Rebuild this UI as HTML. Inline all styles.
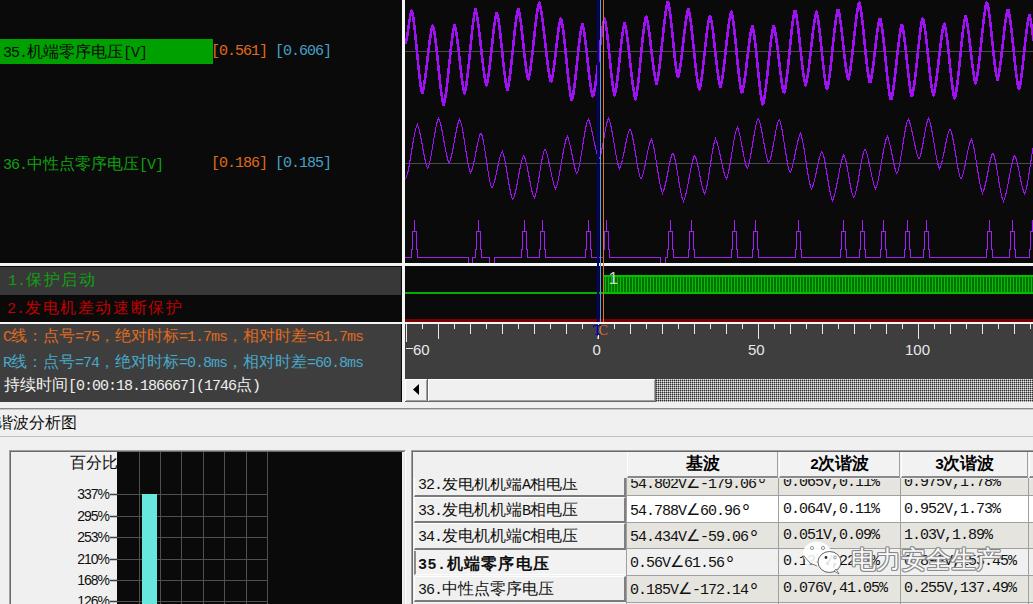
<!DOCTYPE html>
<html><head><meta charset="utf-8"><style>
*{margin:0;padding:0}
html,body{width:1033px;height:604px;overflow:hidden;background:#f0f0f0}
#root{position:relative;width:1033px;height:604px;overflow:hidden}
.r{position:absolute}
.t{position:absolute;white-space:nowrap;font-family:"Liberation Mono",monospace;font-size:13.333px;line-height:18px}
.t .c{font-family:"Liberation Sans",sans-serif;font-size:16px;font-weight:normal}
.t .a{text-decoration:none;font-size:15px;letter-spacing:-1px}
.ls .c{letter-spacing:1.6px}
.ls .a{letter-spacing:0}
svg{position:absolute;left:0;top:0}
.big .c{font-size:16px}
.yl{position:absolute;right:924px;font-family:"Liberation Sans",sans-serif;font-size:14px;letter-spacing:-1px;line-height:18px;color:#101010;text-align:right}
.hd{text-align:center;font-weight:bold}
.hd .c{font-weight:bold;font-size:17px}
.t .dg{font-size:20px;letter-spacing:-4px;text-decoration:none;vertical-align:-2.5px;line-height:10px}
.bold{font-weight:bold}
.bold .c{font-weight:bold;letter-spacing:1.3px}
.bold .a{letter-spacing:0.5px}
.wm{position:absolute;font-family:"Liberation Sans",sans-serif;font-size:24.5px;line-height:30px;color:#fafafa;text-shadow:1px 0 #888,-1px 0 #888,0 1px #888,0 -1px #888,1px 1px #999,-1px -1px #999,1px -1px #999,-1px 1px #999;white-space:nowrap}
</style></head><body><div id="root">
<div class=r style="left:0px;top:0px;width:1033px;height:402px;background:#0a0a0a;"></div>
<div class=r style="left:0px;top:39px;width:213px;height:25px;background:#00a000;"></div>
<div class="t" style="left:3px;top:43px;color:#0a0a0a;"><s class=a>35.</s><b class=c>机端零序电压</b><s class=a>[V]</s></div>
<div class="t" style="left:211px;top:43px;color:#e06a1e;"><s class=a>[0.561]</s></div>
<div class="t" style="left:275px;top:43px;color:#48a0c8;"><s class=a>[0.606]</s></div>
<div class="t" style="left:3px;top:155px;color:#10a010;"><s class=a>36.</s><b class=c>中性点零序电压</b><s class=a>[V]</s></div>
<div class="t" style="left:211px;top:155px;color:#e06a1e;"><s class=a>[0.186]</s></div>
<div class="t" style="left:275px;top:155px;color:#48a0c8;"><s class=a>[0.185]</s></div>
<div class=r style="left:0px;top:263px;width:1033px;height:3px;background:#f4f4f4;"></div>
<div class=r style="left:402px;top:0px;width:3px;height:402px;background:#f4f4f4;"></div>
<div class=r style="left:0px;top:267px;width:401px;height:28px;background:#383838;"></div>
<div class="t ls" style="left:8px;top:271px;color:#10a010;"><s class=a>1.</s><b class=c>保护启动</b></div>
<div class="t ls" style="left:7px;top:299px;color:#c00000;"><s class=a>2.</s><b class=c>发电机差动速断保护</b></div>
<div class=r style="left:0px;top:322px;width:1033px;height:2px;background:#f4f4f4;"></div>
<div class=r style="left:0px;top:324px;width:401px;height:78px;background:#3e3e3e;"></div>
<div class="t" style="left:3px;top:327px;color:#e06a1e;"><s class=a>C</s><b class=c>线：点号</b><s class=a>=75</s><b class=c>，绝对时标</b><s class=a>=1.7ms</s><b class=c>，相对时差</b><s class=a>=61.7ms</s></div>
<div class="t" style="left:3px;top:353px;color:#48a8c8;"><s class=a>R</s><b class=c>线：点号</b><s class=a>=74</s><b class=c>，绝对时标</b><s class=a>=0.8ms</s><b class=c>，相对时差</b><s class=a>=60.8ms</s></div>
<div class="t" style="left:4px;top:376px;color:#f0f0f0;"><b class=c>持续时间</b><s class=a>[0:00:18.186667](1746</s><b class=c>点</b><s class=a>)</s></div>
<div class=r style="left:405px;top:324px;width:628px;height:55px;background:#3e3e3e;"></div>
<div class=r style="left:405px;top:379px;width:628px;height:23px;background:#f0f0f0;"></div>
<div class=r style="left:0px;top:402px;width:1033px;height:202px;background:#f0f0f0;"></div>
<div class=r style="left:0px;top:408px;width:1033px;height:1px;background:#8a8a8a;"></div>
<div class=r style="left:0px;top:409px;width:1033px;height:1px;background:#c8c8c8;"></div>
<div class=r style="left:0px;top:436px;width:1033px;height:1px;background:#c0c0c0;"></div>
<svg width="1033" height="604" viewBox="0 0 1033 604" style="left:0;top:0">
<defs><clipPath id="wc"><rect x="405" y="0" width="628" height="263"/></clipPath></defs>
<g clip-path="url(#wc)">
<line x1="405" y1="51.5" x2="1033" y2="51.5" stroke="#4a4a4a" stroke-width="1"/>
<line x1="405" y1="163.5" x2="1033" y2="163.5" stroke="#4a4a4a" stroke-width="1"/>
<path d="M405.5 44.1 L406.5 39.7 L407.5 33.8 L408.5 27.1 L409.5 20.4 L410.5 14.8 L411.5 10.8 L412.5 13.1 L413.5 19.1 L414.5 27.0 L415.5 36.4 L416.5 46.6 L417.5 57.2 L418.5 67.4 L419.5 76.8 L420.5 84.7 L421.5 90.7 L422.5 92.8 L423.5 88.6 L424.5 82.8 L425.5 75.7 L426.5 67.7 L427.5 59.2 L428.5 50.7 L429.5 42.7 L430.5 35.6 L431.5 29.8 L432.5 25.6 L433.5 27.4 L434.5 32.9 L435.5 40.0 L436.5 48.5 L437.5 57.8 L438.5 67.5 L439.5 77.1 L440.5 86.1 L441.5 93.9 L442.5 100.3 L443.5 104.9 L444.5 102.3 L445.5 96.6 L446.5 89.4 L447.5 80.8 L448.5 71.4 L449.5 61.7 L450.5 52.1 L451.5 43.3 L452.5 35.6 L453.5 29.4 L454.5 24.9 L455.5 28.2 L456.5 33.8 L457.5 41.0 L458.5 49.3 L459.5 58.3 L460.5 67.3 L461.5 75.8 L462.5 83.3 L463.5 89.2 L464.5 93.5 L465.5 89.9 L466.5 83.7 L467.5 76.0 L468.5 66.9 L469.5 57.1 L470.5 46.9 L471.5 36.9 L472.5 27.8 L473.5 19.9 L474.5 13.6 L475.5 9.1 L476.5 13.1 L477.5 18.7 L478.5 25.7 L479.5 33.9 L480.5 42.8 L481.5 51.9 L482.5 60.8 L483.5 69.0 L484.5 76.0 L485.5 81.6 L486.5 85.6 L487.5 81.4 L488.5 75.5 L489.5 68.0 L490.5 59.4 L491.5 50.1 L492.5 40.8 L493.5 31.9 L494.5 24.0 L495.5 17.6 L496.5 12.9 L497.5 14.6 L498.5 20.1 L499.5 27.3 L500.5 35.8 L501.5 45.2 L502.5 54.9 L503.5 64.4 L504.5 73.1 L505.5 80.5 L506.5 86.4 L507.5 89.9 L508.5 85.4 L509.5 79.1 L510.5 71.3 L511.5 62.3 L512.5 52.7 L513.5 42.8 L514.5 33.3 L515.5 24.6 L516.5 17.3 L517.5 11.5 L518.5 8.9 L519.5 13.5 L520.5 19.9 L521.5 27.7 L522.5 36.6 L523.5 46.0 L524.5 55.3 L525.5 63.9 L526.5 71.2 L527.5 76.9 L528.5 79.4 L529.5 74.9 L530.5 68.8 L531.5 61.2 L532.5 52.6 L533.5 43.3 L534.5 33.9 L535.5 24.9 L536.5 16.7 L537.5 9.8 L538.5 4.5 L539.5 2.8 L540.5 7.1 L541.5 12.8 L542.5 19.9 L543.5 27.9 L544.5 36.5 L545.5 45.5 L546.5 54.3 L547.5 62.5 L548.5 69.9 L549.5 76.0 L550.5 80.8 L551.5 81.5 L552.5 76.9 L553.5 70.6 L554.5 63.0 L555.5 54.5 L556.5 45.7 L557.5 37.2 L558.5 29.6 L559.5 23.3 L560.5 18.7 L561.5 19.7 L562.5 25.2 L563.5 32.5 L564.5 41.1 L565.5 50.7 L566.5 60.7 L567.5 70.7 L568.5 80.0 L569.5 88.3 L570.5 95.0 L571.5 100.0 L572.5 98.3 L573.5 92.9 L574.5 85.8 L575.5 77.4 L576.5 68.1 L577.5 58.6 L578.5 49.2 L579.5 40.6 L580.5 33.2 L581.5 27.4 L582.5 24.0 L583.5 28.3 L584.5 34.3 L585.5 41.8 L586.5 50.4 L587.5 59.6 L588.5 68.9 L589.5 77.6 L590.5 85.4 L591.5 91.7 L592.5 96.4 L593.5 94.9 L594.5 90.1 L595.5 83.9 L596.5 76.5 L597.5 68.3 L598.5 59.6 L599.5 50.8 L600.5 42.3 L601.5 34.6 L602.5 27.9 L603.5 22.4 L604.5 18.5 L605.5 22.2 L606.5 28.5 L607.5 36.5 L608.5 45.9 L609.5 55.9 L610.5 66.0 L611.5 75.5 L612.5 83.8 L613.5 90.5 L614.5 95.2 L615.5 91.9 L616.5 85.9 L617.5 78.3 L618.5 69.6 L619.5 60.2 L620.5 50.7 L621.5 41.7 L622.5 33.9 L623.5 27.6 L624.5 23.1 L625.5 26.3 L626.5 31.9 L627.5 38.9 L628.5 47.1 L629.5 56.0 L630.5 65.2 L631.5 74.2 L632.5 82.4 L633.5 89.6 L634.5 95.3 L635.5 99.3 L636.5 94.7 L637.5 88.3 L638.5 80.1 L639.5 70.7 L640.5 60.5 L641.5 50.2 L642.5 40.2 L643.5 31.3 L644.5 23.7 L645.5 18.0 L646.5 16.8 L647.5 21.3 L648.5 27.3 L649.5 34.6 L650.5 42.8 L651.5 51.4 L652.5 59.9 L653.5 67.7 L654.5 74.6 L655.5 80.0 L656.5 83.8 L657.5 79.7 L658.5 73.9 L659.5 66.6 L660.5 58.2 L661.5 49.0 L662.5 39.5 L663.5 30.1 L664.5 21.3 L665.5 13.6 L666.5 7.2 L667.5 2.3 L668.5 3.3 L669.5 9.0 L670.5 16.5 L671.5 25.3 L672.5 35.1 L673.5 45.1 L674.5 54.8 L675.5 63.6 L676.5 70.9 L677.5 76.3 L678.5 76.5 L679.5 71.7 L680.5 65.3 L681.5 57.6 L682.5 49.0 L683.5 40.1 L684.5 31.4 L685.5 23.4 L686.5 16.5 L687.5 11.2 L688.5 8.9 L689.5 13.5 L690.5 19.9 L691.5 27.7 L692.5 36.7 L693.5 46.3 L694.5 56.0 L695.5 65.4 L696.5 74.0 L697.5 81.2 L698.5 86.9 L699.5 89.5 L700.5 85.1 L701.5 79.0 L702.5 71.5 L703.5 62.9 L704.5 53.8 L705.5 44.6 L706.5 35.8 L707.5 27.9 L708.5 21.4 L709.5 16.4 L710.5 16.4 L711.5 21.3 L712.5 27.9 L713.5 35.8 L714.5 44.6 L715.5 53.8 L716.5 62.8 L717.5 71.1 L718.5 78.2 L719.5 83.8 L720.5 87.1 L721.5 82.9 L722.5 77.0 L723.5 69.8 L724.5 61.4 L725.5 52.4 L726.5 43.2 L727.5 34.3 L728.5 26.2 L729.5 19.4 L730.5 14.0 L731.5 11.6 L732.5 16.5 L733.5 23.3 L734.5 31.7 L735.5 41.2 L736.5 51.3 L737.5 61.5 L738.5 71.2 L739.5 79.8 L740.5 86.9 L741.5 92.2 L742.5 91.7 L743.5 87.0 L744.5 80.8 L745.5 73.4 L746.5 65.2 L747.5 56.7 L748.5 48.3 L749.5 40.6 L750.5 34.0 L751.5 28.8 L752.5 25.9 L753.5 30.5 L754.5 37.1 L755.5 45.2 L756.5 54.6 L757.5 64.5 L758.5 74.6 L759.5 84.1 L760.5 92.5 L761.5 99.4 L762.5 104.5 L763.5 102.8 L764.5 97.4 L765.5 90.3 L766.5 82.0 L767.5 72.8 L768.5 63.1 L769.5 53.7 L770.5 44.8 L771.5 37.1 L772.5 30.8 L773.5 26.2 L774.5 28.4 L775.5 33.5 L776.5 40.1 L777.5 47.8 L778.5 56.2 L779.5 64.8 L780.5 73.1 L781.5 80.6 L782.5 86.9 L783.5 91.7 L784.5 92.2 L785.5 87.0 L786.5 80.1 L787.5 71.6 L788.5 62.1 L789.5 52.0 L790.5 41.8 L791.5 32.2 L792.5 23.6 L793.5 16.5 L794.5 11.1 L795.5 11.0 L796.5 16.0 L797.5 22.7 L798.5 30.8 L799.5 39.8 L800.5 49.2 L801.5 58.6 L802.5 67.3 L803.5 74.8 L804.5 80.9 L805.5 85.3 L806.5 82.2 L807.5 76.8 L808.5 70.1 L809.5 62.2 L810.5 53.6 L811.5 44.7 L812.5 36.0 L813.5 28.1 L814.5 21.2 L815.5 15.7 L816.5 11.8 L817.5 16.1 L818.5 22.3 L819.5 30.0 L820.5 38.9 L821.5 48.5 L822.5 58.3 L823.5 67.7 L824.5 76.0 L825.5 83.0 L826.5 88.3 L827.5 88.3 L828.5 83.1 L829.5 76.3 L830.5 68.1 L831.5 58.9 L832.5 49.2 L833.5 39.5 L834.5 30.3 L835.5 22.1 L836.5 15.3 L837.5 10.1 L838.5 10.0 L839.5 14.9 L840.5 21.5 L841.5 29.4 L842.5 38.2 L843.5 47.4 L844.5 56.3 L845.5 64.5 L846.5 71.5 L847.5 77.0 L848.5 79.4 L849.5 74.9 L850.5 68.7 L851.5 61.1 L852.5 52.4 L853.5 43.1 L854.5 33.7 L855.5 24.6 L856.5 16.4 L857.5 9.5 L858.5 4.1 L859.5 2.5 L860.5 7.5 L861.5 14.2 L862.5 22.4 L863.5 31.7 L864.5 41.6 L865.5 51.6 L866.5 61.0 L867.5 69.5 L868.5 76.5 L869.5 81.8 L870.5 82.1 L871.5 77.3 L872.5 71.0 L873.5 63.3 L874.5 54.9 L875.5 46.2 L876.5 37.8 L877.5 30.1 L878.5 23.8 L879.5 19.0 L880.5 19.2 L881.5 24.5 L882.5 31.5 L883.5 39.9 L884.5 49.2 L885.5 59.2 L886.5 69.1 L887.5 78.4 L888.5 86.8 L889.5 93.8 L890.5 99.1 L891.5 99.2 L892.5 94.3 L893.5 87.7 L894.5 79.9 L895.5 71.1 L896.5 61.9 L897.5 52.7 L898.5 44.0 L899.5 36.2 L900.5 29.9 L901.5 25.1 L902.5 26.0 L903.5 31.5 L904.5 38.7 L905.5 47.3 L906.5 56.7 L907.5 66.3 L908.5 75.6 L909.5 83.9 L910.5 90.8 L911.5 95.9 L912.5 95.1 L913.5 89.8 L914.5 82.9 L915.5 74.7 L916.5 65.5 L917.5 55.9 L918.5 46.4 L919.5 37.4 L920.5 29.6 L921.5 23.1 L922.5 18.4 L923.5 20.1 L924.5 25.6 L925.5 32.8 L926.5 41.3 L927.5 50.6 L928.5 60.3 L929.5 69.8 L930.5 78.5 L931.5 86.0 L932.5 91.8 L933.5 95.3 L934.5 91.3 L935.5 85.7 L936.5 78.8 L937.5 70.9 L938.5 62.3 L939.5 53.5 L940.5 45.1 L941.5 37.4 L942.5 30.8 L943.5 25.7 L944.5 23.5 L945.5 28.1 L946.5 34.5 L947.5 42.5 L948.5 51.4 L949.5 61.0 L950.5 70.6 L951.5 79.5 L952.5 87.5 L953.5 93.9 L954.5 98.5 L955.5 95.8 L956.5 90.0 L957.5 82.4 L958.5 73.6 L959.5 63.9 L960.5 53.8 L961.5 44.0 L962.5 34.8 L963.5 26.8 L964.5 20.4 L965.5 15.9 L966.5 19.0 L967.5 24.6 L968.5 31.7 L969.5 39.9 L970.5 48.8 L971.5 57.7 L972.5 66.0 L973.5 73.4 L974.5 79.3 L975.5 83.5 L976.5 80.1 L977.5 74.4 L978.5 67.2 L979.5 58.8 L980.5 49.5 L981.5 39.9 L982.5 30.5 L983.5 21.6 L984.5 13.7 L985.5 7.2 L986.5 2.4 L987.5 3.3 L988.5 8.7 L989.5 15.8 L990.5 24.3 L991.5 33.7 L992.5 43.4 L993.5 53.1 L994.5 62.0 L995.5 69.7 L996.5 75.8 L997.5 80.1 L998.5 76.1 L999.5 70.5 L1000.5 63.4 L1001.5 55.2 L1002.5 46.4 L1003.5 37.4 L1004.5 28.9 L1005.5 21.2 L1006.5 14.8 L1007.5 10.0 L1008.5 10.1 L1009.5 15.3 L1010.5 22.1 L1011.5 30.3 L1012.5 39.5 L1013.5 49.1 L1014.5 58.8 L1015.5 68.0 L1016.5 76.2 L1017.5 83.0 L1018.5 88.2 L1019.5 88.2 L1020.5 83.0 L1021.5 76.1 L1022.5 67.8 L1023.5 58.6 L1024.5 49.0 L1025.5 39.6 L1026.5 31.0 L1027.5 23.6 L1028.5 17.9 L1029.5 15.2 L1030.5 19.5 L1031.5 25.3 L1032.5 32.5 L1033.5 40.7" fill="none" stroke="#a010f4" stroke-width="2.6" stroke-linejoin="round" shape-rendering="crispEdges"/>
<path d="M405.5 178.8 L406.5 177.0 L407.5 173.6 L408.5 169.1 L409.5 163.8 L410.5 158.0 L411.5 151.8 L412.5 145.6 L413.5 139.6 L414.5 134.3 L415.5 129.7 L416.5 126.2 L417.5 124.5 L418.5 127.2 L419.5 131.0 L420.5 135.6 L421.5 140.9 L422.5 146.4 L423.5 152.0 L424.5 157.3 L425.5 161.9 L426.5 165.7 L427.5 168.4 L428.5 166.7 L429.5 163.2 L430.5 158.6 L431.5 153.2 L432.5 147.3 L433.5 141.2 L434.5 135.1 L435.5 129.6 L436.5 124.7 L437.5 120.8 L438.5 118.0 L439.5 120.0 L440.5 123.5 L441.5 127.9 L442.5 133.0 L443.5 138.6 L444.5 144.2 L445.5 149.7 L446.5 154.6 L447.5 158.8 L448.5 161.9 L449.5 162.5 L450.5 159.6 L451.5 155.8 L452.5 151.1 L453.5 145.9 L454.5 140.4 L455.5 135.0 L456.5 129.9 L457.5 125.4 L458.5 121.7 L459.5 119.1 L460.5 120.9 L461.5 124.7 L462.5 129.6 L463.5 135.4 L464.5 141.7 L465.5 148.3 L466.5 154.7 L467.5 160.7 L468.5 165.9 L469.5 170.1 L470.5 173.1 L471.5 171.3 L472.5 168.1 L473.5 164.1 L474.5 159.4 L475.5 154.4 L476.5 149.2 L477.5 144.2 L478.5 139.8 L479.5 136.1 L480.5 133.3 L481.5 133.6 L482.5 137.2 L483.5 142.0 L484.5 147.7 L485.5 154.1 L486.5 160.9 L487.5 167.6 L488.5 174.0 L489.5 179.6 L490.5 184.3 L491.5 187.8 L492.5 187.6 L493.5 185.0 L494.5 181.5 L495.5 177.3 L496.5 172.7 L497.5 167.9 L498.5 163.3 L499.5 159.0 L500.5 155.4 L501.5 152.5 L502.5 151.3 L503.5 154.3 L504.5 158.4 L505.5 163.4 L506.5 169.1 L507.5 175.2 L508.5 181.3 L509.5 187.1 L510.5 192.2 L511.5 196.3 L512.5 199.4 L513.5 198.6 L514.5 195.5 L515.5 191.6 L516.5 187.0 L517.5 181.9 L518.5 176.5 L519.5 171.2 L520.5 166.3 L521.5 161.9 L522.5 158.3 L523.5 155.7 L524.5 156.7 L525.5 159.8 L526.5 163.8 L527.5 168.5 L528.5 173.7 L529.5 179.1 L530.5 184.4 L531.5 189.2 L532.5 193.3 L533.5 196.5 L534.5 197.9 L535.5 194.9 L536.5 190.9 L537.5 186.0 L538.5 180.3 L539.5 174.3 L540.5 168.2 L541.5 162.4 L542.5 157.2 L543.5 152.9 L544.5 149.6 L545.5 149.4 L546.5 152.1 L547.5 155.6 L548.5 159.9 L549.5 164.6 L550.5 169.6 L551.5 174.5 L552.5 179.1 L553.5 183.1 L554.5 186.3 L555.5 188.6 L556.5 186.6 L557.5 183.1 L558.5 178.7 L559.5 173.6 L560.5 168.0 L561.5 162.1 L562.5 156.2 L563.5 150.6 L564.5 145.6 L565.5 141.3 L566.5 138.0 L567.5 136.4 L568.5 138.9 L569.5 142.5 L570.5 147.0 L571.5 152.0 L572.5 157.2 L573.5 162.3 L574.5 166.8 L575.5 170.6 L576.5 173.4 L577.5 172.7 L578.5 169.2 L579.5 164.6 L580.5 159.2 L581.5 153.2 L582.5 146.8 L583.5 140.4 L584.5 134.3 L585.5 128.8 L586.5 124.1 L587.5 120.5 L588.5 119.2 L589.5 121.7 L590.5 125.0 L591.5 129.0 L592.5 133.5 L593.5 138.4 L594.5 143.3 L595.5 148.0 L596.5 152.2 L597.5 155.7 L598.5 158.4 L599.5 158.7 L600.5 155.6 L601.5 151.4 L602.5 146.3 L603.5 140.7 L604.5 135.0 L605.5 129.5 L606.5 124.6 L607.5 120.7 L608.5 118.0 L609.5 120.2 L610.5 123.9 L611.5 128.5 L612.5 134.0 L613.5 139.9 L614.5 146.1 L615.5 152.0 L616.5 157.6 L617.5 162.3 L618.5 166.1 L619.5 168.8 L620.5 166.6 L621.5 163.5 L622.5 159.5 L623.5 155.0 L624.5 150.1 L625.5 145.1 L626.5 140.3 L627.5 135.9 L628.5 132.3 L629.5 129.5 L630.5 129.2 L631.5 132.4 L632.5 136.6 L633.5 141.8 L634.5 147.6 L635.5 153.7 L636.5 159.8 L637.5 165.7 L638.5 170.9 L639.5 175.2 L640.5 178.5 L641.5 178.7 L642.5 175.9 L643.5 172.2 L644.5 167.8 L645.5 162.8 L646.5 157.6 L647.5 152.6 L648.5 147.9 L649.5 143.9 L650.5 140.7 L651.5 138.9 L652.5 141.9 L653.5 145.9 L654.5 151.0 L655.5 156.8 L656.5 163.1 L657.5 169.5 L658.5 175.8 L659.5 181.6 L660.5 186.5 L661.5 190.5 L662.5 193.3 L663.5 191.0 L664.5 187.8 L665.5 183.7 L666.5 179.0 L667.5 173.9 L668.5 168.7 L669.5 163.8 L670.5 159.5 L671.5 155.9 L672.5 153.2 L673.5 153.9 L674.5 157.3 L675.5 161.8 L676.5 167.1 L677.5 173.0 L678.5 179.1 L679.5 185.1 L680.5 190.6 L681.5 195.4 L682.5 199.1 L683.5 201.3 L684.5 198.9 L685.5 195.5 L686.5 191.3 L687.5 186.5 L688.5 181.3 L689.5 175.9 L690.5 170.6 L691.5 165.7 L692.5 161.5 L693.5 158.0 L694.5 155.5 L695.5 156.8 L696.5 160.0 L697.5 163.9 L698.5 168.6 L699.5 173.7 L700.5 178.8 L701.5 183.7 L702.5 187.9 L703.5 191.4 L704.5 193.9 L705.5 192.0 L706.5 188.1 L707.5 183.0 L708.5 177.1 L709.5 170.5 L710.5 163.8 L711.5 157.2 L712.5 151.1 L713.5 145.8 L714.5 141.7 L715.5 138.7 L716.5 140.8 L717.5 143.9 L718.5 147.6 L719.5 152.0 L720.5 156.8 L721.5 161.7 L722.5 166.4 L723.5 170.8 L724.5 174.5 L725.5 177.4 L726.5 179.1 L727.5 176.2 L728.5 172.2 L729.5 167.2 L730.5 161.5 L731.5 155.3 L732.5 149.0 L733.5 142.9 L734.5 137.4 L735.5 132.7 L736.5 129.0 L737.5 127.3 L738.5 130.0 L739.5 133.7 L740.5 138.3 L741.5 143.5 L742.5 149.0 L743.5 154.4 L744.5 159.3 L745.5 163.6 L746.5 166.9 L747.5 168.4 L748.5 165.4 L749.5 161.4 L750.5 156.5 L751.5 150.9 L752.5 144.8 L753.5 138.7 L754.5 132.8 L755.5 127.5 L756.5 123.0 L757.5 119.6 L758.5 118.4 L759.5 121.2 L760.5 125.0 L761.5 129.7 L762.5 135.0 L763.5 140.6 L764.5 146.1 L765.5 151.4 L766.5 156.1 L767.5 159.9 L768.5 162.7 L769.5 161.7 L770.5 158.4 L771.5 154.2 L772.5 149.3 L773.5 143.8 L774.5 138.2 L775.5 132.7 L776.5 127.8 L777.5 123.6 L778.5 120.3 L779.5 119.4 L780.5 122.7 L781.5 127.1 L782.5 132.4 L783.5 138.5 L784.5 145.0 L785.5 151.6 L786.5 157.8 L787.5 163.4 L788.5 168.1 L789.5 171.7 L790.5 172.5 L791.5 169.9 L792.5 166.4 L793.5 162.1 L794.5 157.3 L795.5 152.2 L796.5 147.3 L797.5 142.6 L798.5 138.6 L799.5 135.4 L800.5 133.2 L801.5 136.1 L802.5 140.3 L803.5 145.5 L804.5 151.6 L805.5 158.2 L806.5 164.9 L807.5 171.4 L808.5 177.4 L809.5 182.6 L810.5 186.6 L811.5 189.0 L812.5 186.9 L813.5 183.8 L814.5 180.0 L815.5 175.7 L816.5 171.0 L817.5 166.3 L818.5 161.8 L819.5 157.7 L820.5 154.4 L821.5 151.8 L822.5 152.1 L823.5 155.4 L824.5 159.9 L825.5 165.2 L826.5 171.1 L827.5 177.3 L828.5 183.4 L829.5 189.1 L830.5 194.0 L831.5 197.9 L832.5 200.6 L833.5 198.3 L834.5 195.0 L835.5 190.9 L836.5 186.2 L837.5 181.0 L838.5 175.7 L839.5 170.4 L840.5 165.5 L841.5 161.2 L842.5 157.7 L843.5 155.1 L844.5 156.2 L845.5 159.5 L846.5 163.9 L847.5 169.1 L848.5 174.7 L849.5 180.4 L850.5 185.9 L851.5 190.8 L852.5 194.7 L853.5 197.7 L854.5 196.6 L855.5 193.4 L856.5 189.1 L857.5 184.1 L858.5 178.6 L859.5 172.8 L860.5 167.0 L861.5 161.5 L862.5 156.7 L863.5 152.6 L864.5 149.5 L865.5 149.4 L866.5 152.1 L867.5 155.6 L868.5 159.9 L869.5 164.6 L870.5 169.6 L871.5 174.5 L872.5 179.1 L873.5 183.1 L874.5 186.3 L875.5 188.6 L876.5 186.6 L877.5 183.1 L878.5 178.7 L879.5 173.6 L880.5 168.0 L881.5 162.1 L882.5 156.2 L883.5 150.6 L884.5 145.6 L885.5 141.3 L886.5 138.0 L887.5 136.4 L888.5 138.9 L889.5 142.5 L890.5 147.0 L891.5 152.0 L892.5 157.2 L893.5 162.3 L894.5 166.8 L895.5 170.6 L896.5 173.4 L897.5 172.7 L898.5 169.2 L899.5 164.6 L900.5 159.2 L901.5 153.2 L902.5 146.8 L903.5 140.4 L904.5 134.3 L905.5 128.8 L906.5 124.1 L907.5 120.5 L908.5 119.2 L909.5 121.7 L910.5 125.0 L911.5 129.0 L912.5 133.5 L913.5 138.4 L914.5 143.3 L915.5 148.0 L916.5 152.2 L917.5 155.7 L918.5 158.4 L919.5 158.7 L920.5 155.6 L921.5 151.4 L922.5 146.3 L923.5 140.7 L924.5 135.0 L925.5 129.5 L926.5 124.6 L927.5 120.7 L928.5 118.0 L929.5 120.2 L930.5 123.9 L931.5 128.5 L932.5 134.0 L933.5 139.9 L934.5 146.1 L935.5 152.0 L936.5 157.6 L937.5 162.3 L938.5 166.1 L939.5 168.8 L940.5 166.6 L941.5 163.5 L942.5 159.5 L943.5 155.0 L944.5 150.1 L945.5 145.1 L946.5 140.3 L947.5 135.9 L948.5 132.3 L949.5 129.5 L950.5 129.2 L951.5 132.4 L952.5 136.6 L953.5 141.8 L954.5 147.6 L955.5 153.7 L956.5 159.8 L957.5 165.7 L958.5 170.9 L959.5 175.2 L960.5 178.5 L961.5 178.7 L962.5 175.9 L963.5 172.2 L964.5 167.8 L965.5 162.8 L966.5 157.6 L967.5 152.6 L968.5 147.9 L969.5 143.9 L970.5 140.7 L971.5 138.9 L972.5 141.9 L973.5 145.9 L974.5 151.0 L975.5 156.8 L976.5 163.1 L977.5 169.5 L978.5 175.8 L979.5 181.6 L980.5 186.5 L981.5 190.5 L982.5 193.3 L983.5 191.0 L984.5 187.8 L985.5 183.7 L986.5 179.0 L987.5 173.9 L988.5 168.7 L989.5 163.8 L990.5 159.5 L991.5 155.9 L992.5 153.2 L993.5 153.9 L994.5 157.3 L995.5 161.8 L996.5 167.1 L997.5 173.0 L998.5 179.1 L999.5 185.1 L1000.5 190.6 L1001.5 195.4 L1002.5 199.1 L1003.5 201.3 L1004.5 198.9 L1005.5 195.5 L1006.5 191.3 L1007.5 186.5 L1008.5 181.3 L1009.5 175.9 L1010.5 170.6 L1011.5 165.7 L1012.5 161.5 L1013.5 158.0 L1014.5 155.5 L1015.5 156.8 L1016.5 160.0 L1017.5 163.9 L1018.5 168.6 L1019.5 173.7 L1020.5 178.8 L1021.5 183.7 L1022.5 187.9 L1023.5 191.4 L1024.5 193.9 L1025.5 192.0 L1026.5 188.1 L1027.5 183.0 L1028.5 177.1 L1029.5 170.5 L1030.5 163.8 L1031.5 157.2 L1032.5 151.1 L1033.5 145.8" fill="none" stroke="#a010f4" stroke-width="1.1" shape-rendering="crispEdges"/>
<path d="M405 257.5 H411 V249.5 H412 V231.5 H414 V220 V231.5 H416 V249.5 H417 V257.5 H468 V266 M472 266 V257.5 H475 V249.5 H476 V231.5 H478 V220 V231.5 H480 V249.5 H481 V257.5 H489 V266 M494 266 V257.5 H521 V249.5 H522 V231.5 H524 V220 V231.5 H526 V249.5 H527 V257.5 H539 V249.5 H540 V231.5 H542 V220 V231.5 H544 V249.5 H545 V257.5 H585 V249.5 H586 V231.5 H588 V220 V231.5 H590 V249.5 H591 V257.5 H603 V249.5 H604 V231.5 H606 V220 V231.5 H608 V249.5 H609 V257.5 H660 V266 M665 266 V257.5 H667 V249.5 H668 V231.5 H670 V220 V231.5 H672 V249.5 H673 V257.5 H688 V249.5 H689 V231.5 H691 V220 V231.5 H693 V249.5 H694 V257.5 H731 V249.5 H732 V231.5 H734 V220 V231.5 H736 V249.5 H737 V257.5 H752 V249.5 H753 V231.5 H755 V220 V231.5 H757 V249.5 H758 V257.5 H795 V249.5 H796 V231.5 H798 V220 V231.5 H800 V249.5 H801 V257.5 H840 V249.5 H841 V231.5 H843 V220 V231.5 H845 V249.5 H846 V257.5 H859 V249.5 H860 V231.5 H862 V220 V231.5 H864 V249.5 H865 V257.5 H880 V249.5 H881 V231.5 H883 V220 V231.5 H885 V249.5 H886 V257.5 H904 V249.5 H905 V231.5 H907 V220 V231.5 H909 V249.5 H910 V257.5 H923 V249.5 H924 V231.5 H926 V220 V231.5 H928 V249.5 H929 V257.5 H986 V249.5 H987 V231.5 H989 V220 V231.5 H991 V249.5 H992 V257.5 H1009 V249.5 H1010 V231.5 H1012 V220 V231.5 H1014 V249.5 H1015 V257.5 H1029 V249.5 H1030 V231.5 H1032 V220 V231.5 H1034 V249.5 H1035 V257.5 H1033" fill="none" stroke="#a020f0" stroke-width="1" shape-rendering="crispEdges"/>
</g>
<line x1="405" y1="293" x2="603" y2="293" stroke="#00b000" stroke-width="2"/>
<rect x="603" y="275" width="430" height="19" fill="#007000"/>
<line x1="603" y1="276" x2="1033" y2="276" stroke="#00c000" stroke-width="2"/>
<line x1="603" y1="293" x2="1033" y2="293" stroke="#00c000" stroke-width="2"/>
<g stroke="#00c000" stroke-width="1"><line x1="605.5" y1="277" x2="605.5" y2="292" /><line x1="608.5" y1="277" x2="608.5" y2="292" /><line x1="611.5" y1="277" x2="611.5" y2="292" /><line x1="614.5" y1="277" x2="614.5" y2="292" /><line x1="617.5" y1="277" x2="617.5" y2="292" /><line x1="620.5" y1="277" x2="620.5" y2="292" /><line x1="623.5" y1="277" x2="623.5" y2="292" /><line x1="626.5" y1="277" x2="626.5" y2="292" /><line x1="629.5" y1="277" x2="629.5" y2="292" /><line x1="632.5" y1="277" x2="632.5" y2="292" /><line x1="635.5" y1="277" x2="635.5" y2="292" /><line x1="638.5" y1="277" x2="638.5" y2="292" /><line x1="641.5" y1="277" x2="641.5" y2="292" /><line x1="644.5" y1="277" x2="644.5" y2="292" /><line x1="647.5" y1="277" x2="647.5" y2="292" /><line x1="650.5" y1="277" x2="650.5" y2="292" /><line x1="653.5" y1="277" x2="653.5" y2="292" /><line x1="656.5" y1="277" x2="656.5" y2="292" /><line x1="659.5" y1="277" x2="659.5" y2="292" /><line x1="662.5" y1="277" x2="662.5" y2="292" /><line x1="665.5" y1="277" x2="665.5" y2="292" /><line x1="668.5" y1="277" x2="668.5" y2="292" /><line x1="671.5" y1="277" x2="671.5" y2="292" /><line x1="674.5" y1="277" x2="674.5" y2="292" /><line x1="677.5" y1="277" x2="677.5" y2="292" /><line x1="680.5" y1="277" x2="680.5" y2="292" /><line x1="683.5" y1="277" x2="683.5" y2="292" /><line x1="686.5" y1="277" x2="686.5" y2="292" /><line x1="689.5" y1="277" x2="689.5" y2="292" /><line x1="692.5" y1="277" x2="692.5" y2="292" /><line x1="695.5" y1="277" x2="695.5" y2="292" /><line x1="698.5" y1="277" x2="698.5" y2="292" /><line x1="701.5" y1="277" x2="701.5" y2="292" /><line x1="704.5" y1="277" x2="704.5" y2="292" /><line x1="707.5" y1="277" x2="707.5" y2="292" /><line x1="710.5" y1="277" x2="710.5" y2="292" /><line x1="713.5" y1="277" x2="713.5" y2="292" /><line x1="716.5" y1="277" x2="716.5" y2="292" /><line x1="719.5" y1="277" x2="719.5" y2="292" /><line x1="722.5" y1="277" x2="722.5" y2="292" /><line x1="725.5" y1="277" x2="725.5" y2="292" /><line x1="728.5" y1="277" x2="728.5" y2="292" /><line x1="731.5" y1="277" x2="731.5" y2="292" /><line x1="734.5" y1="277" x2="734.5" y2="292" /><line x1="737.5" y1="277" x2="737.5" y2="292" /><line x1="740.5" y1="277" x2="740.5" y2="292" /><line x1="743.5" y1="277" x2="743.5" y2="292" /><line x1="746.5" y1="277" x2="746.5" y2="292" /><line x1="749.5" y1="277" x2="749.5" y2="292" /><line x1="752.5" y1="277" x2="752.5" y2="292" /><line x1="755.5" y1="277" x2="755.5" y2="292" /><line x1="758.5" y1="277" x2="758.5" y2="292" /><line x1="761.5" y1="277" x2="761.5" y2="292" /><line x1="764.5" y1="277" x2="764.5" y2="292" /><line x1="767.5" y1="277" x2="767.5" y2="292" /><line x1="770.5" y1="277" x2="770.5" y2="292" /><line x1="773.5" y1="277" x2="773.5" y2="292" /><line x1="776.5" y1="277" x2="776.5" y2="292" /><line x1="779.5" y1="277" x2="779.5" y2="292" /><line x1="782.5" y1="277" x2="782.5" y2="292" /><line x1="785.5" y1="277" x2="785.5" y2="292" /><line x1="788.5" y1="277" x2="788.5" y2="292" /><line x1="791.5" y1="277" x2="791.5" y2="292" /><line x1="794.5" y1="277" x2="794.5" y2="292" /><line x1="797.5" y1="277" x2="797.5" y2="292" /><line x1="800.5" y1="277" x2="800.5" y2="292" /><line x1="803.5" y1="277" x2="803.5" y2="292" /><line x1="806.5" y1="277" x2="806.5" y2="292" /><line x1="809.5" y1="277" x2="809.5" y2="292" /><line x1="812.5" y1="277" x2="812.5" y2="292" /><line x1="815.5" y1="277" x2="815.5" y2="292" /><line x1="818.5" y1="277" x2="818.5" y2="292" /><line x1="821.5" y1="277" x2="821.5" y2="292" /><line x1="824.5" y1="277" x2="824.5" y2="292" /><line x1="827.5" y1="277" x2="827.5" y2="292" /><line x1="830.5" y1="277" x2="830.5" y2="292" /><line x1="833.5" y1="277" x2="833.5" y2="292" /><line x1="836.5" y1="277" x2="836.5" y2="292" /><line x1="839.5" y1="277" x2="839.5" y2="292" /><line x1="842.5" y1="277" x2="842.5" y2="292" /><line x1="845.5" y1="277" x2="845.5" y2="292" /><line x1="848.5" y1="277" x2="848.5" y2="292" /><line x1="851.5" y1="277" x2="851.5" y2="292" /><line x1="854.5" y1="277" x2="854.5" y2="292" /><line x1="857.5" y1="277" x2="857.5" y2="292" /><line x1="860.5" y1="277" x2="860.5" y2="292" /><line x1="863.5" y1="277" x2="863.5" y2="292" /><line x1="866.5" y1="277" x2="866.5" y2="292" /><line x1="869.5" y1="277" x2="869.5" y2="292" /><line x1="872.5" y1="277" x2="872.5" y2="292" /><line x1="875.5" y1="277" x2="875.5" y2="292" /><line x1="878.5" y1="277" x2="878.5" y2="292" /><line x1="881.5" y1="277" x2="881.5" y2="292" /><line x1="884.5" y1="277" x2="884.5" y2="292" /><line x1="887.5" y1="277" x2="887.5" y2="292" /><line x1="890.5" y1="277" x2="890.5" y2="292" /><line x1="893.5" y1="277" x2="893.5" y2="292" /><line x1="896.5" y1="277" x2="896.5" y2="292" /><line x1="899.5" y1="277" x2="899.5" y2="292" /><line x1="902.5" y1="277" x2="902.5" y2="292" /><line x1="905.5" y1="277" x2="905.5" y2="292" /><line x1="908.5" y1="277" x2="908.5" y2="292" /><line x1="911.5" y1="277" x2="911.5" y2="292" /><line x1="914.5" y1="277" x2="914.5" y2="292" /><line x1="917.5" y1="277" x2="917.5" y2="292" /><line x1="920.5" y1="277" x2="920.5" y2="292" /><line x1="923.5" y1="277" x2="923.5" y2="292" /><line x1="926.5" y1="277" x2="926.5" y2="292" /><line x1="929.5" y1="277" x2="929.5" y2="292" /><line x1="932.5" y1="277" x2="932.5" y2="292" /><line x1="935.5" y1="277" x2="935.5" y2="292" /><line x1="938.5" y1="277" x2="938.5" y2="292" /><line x1="941.5" y1="277" x2="941.5" y2="292" /><line x1="944.5" y1="277" x2="944.5" y2="292" /><line x1="947.5" y1="277" x2="947.5" y2="292" /><line x1="950.5" y1="277" x2="950.5" y2="292" /><line x1="953.5" y1="277" x2="953.5" y2="292" /><line x1="956.5" y1="277" x2="956.5" y2="292" /><line x1="959.5" y1="277" x2="959.5" y2="292" /><line x1="962.5" y1="277" x2="962.5" y2="292" /><line x1="965.5" y1="277" x2="965.5" y2="292" /><line x1="968.5" y1="277" x2="968.5" y2="292" /><line x1="971.5" y1="277" x2="971.5" y2="292" /><line x1="974.5" y1="277" x2="974.5" y2="292" /><line x1="977.5" y1="277" x2="977.5" y2="292" /><line x1="980.5" y1="277" x2="980.5" y2="292" /><line x1="983.5" y1="277" x2="983.5" y2="292" /><line x1="986.5" y1="277" x2="986.5" y2="292" /><line x1="989.5" y1="277" x2="989.5" y2="292" /><line x1="992.5" y1="277" x2="992.5" y2="292" /><line x1="995.5" y1="277" x2="995.5" y2="292" /><line x1="998.5" y1="277" x2="998.5" y2="292" /><line x1="1001.5" y1="277" x2="1001.5" y2="292" /><line x1="1004.5" y1="277" x2="1004.5" y2="292" /><line x1="1007.5" y1="277" x2="1007.5" y2="292" /><line x1="1010.5" y1="277" x2="1010.5" y2="292" /><line x1="1013.5" y1="277" x2="1013.5" y2="292" /><line x1="1016.5" y1="277" x2="1016.5" y2="292" /><line x1="1019.5" y1="277" x2="1019.5" y2="292" /><line x1="1022.5" y1="277" x2="1022.5" y2="292" /><line x1="1025.5" y1="277" x2="1025.5" y2="292" /><line x1="1028.5" y1="277" x2="1028.5" y2="292" /><line x1="1031.5" y1="277" x2="1031.5" y2="292" /></g>
<rect x="405" y="319" width="628" height="3" fill="#7a0000"/>
<text x="608.5" y="284" font-family="Liberation Sans" font-size="17" fill="#d0d0d0">1</text>
<g stroke="#e8e8e8" stroke-width="1"><line x1="406.5" y1="324" x2="406.5" y2="342"/><line x1="422.5" y1="324" x2="422.5" y2="329"/><line x1="438.5" y1="324" x2="438.5" y2="339"/><line x1="454.5" y1="324" x2="454.5" y2="329"/><line x1="470.5" y1="324" x2="470.5" y2="334"/><line x1="486.5" y1="324" x2="486.5" y2="329"/><line x1="502.5" y1="324" x2="502.5" y2="334"/><line x1="518.5" y1="324" x2="518.5" y2="329"/><line x1="534.5" y1="324" x2="534.5" y2="334"/><line x1="550.5" y1="324" x2="550.5" y2="329"/><line x1="566.5" y1="324" x2="566.5" y2="334"/><line x1="582.5" y1="324" x2="582.5" y2="329"/><line x1="598.5" y1="324" x2="598.5" y2="339"/><line x1="614.5" y1="324" x2="614.5" y2="329"/><line x1="630.5" y1="324" x2="630.5" y2="334"/><line x1="646.5" y1="324" x2="646.5" y2="329"/><line x1="662.5" y1="324" x2="662.5" y2="334"/><line x1="678.5" y1="324" x2="678.5" y2="329"/><line x1="694.5" y1="324" x2="694.5" y2="334"/><line x1="710.5" y1="324" x2="710.5" y2="329"/><line x1="726.5" y1="324" x2="726.5" y2="334"/><line x1="742.5" y1="324" x2="742.5" y2="329"/><line x1="758.5" y1="324" x2="758.5" y2="339"/><line x1="774.5" y1="324" x2="774.5" y2="329"/><line x1="790.5" y1="324" x2="790.5" y2="334"/><line x1="806.5" y1="324" x2="806.5" y2="329"/><line x1="822.5" y1="324" x2="822.5" y2="334"/><line x1="838.5" y1="324" x2="838.5" y2="329"/><line x1="854.5" y1="324" x2="854.5" y2="334"/><line x1="870.5" y1="324" x2="870.5" y2="329"/><line x1="886.5" y1="324" x2="886.5" y2="334"/><line x1="902.5" y1="324" x2="902.5" y2="329"/><line x1="918.5" y1="324" x2="918.5" y2="339"/><line x1="934.5" y1="324" x2="934.5" y2="329"/><line x1="950.5" y1="324" x2="950.5" y2="334"/><line x1="966.5" y1="324" x2="966.5" y2="329"/><line x1="982.5" y1="324" x2="982.5" y2="334"/><line x1="998.5" y1="324" x2="998.5" y2="329"/><line x1="1014.5" y1="324" x2="1014.5" y2="334"/><line x1="1030.5" y1="324" x2="1030.5" y2="329"/></g>
<line x1="406" y1="348.5" x2="413" y2="348.5" stroke="#e8e8e8" stroke-width="1"/>
<text x="413" y="354.5" font-family="Liberation Sans" font-size="15" fill="#e8e8e8">60</text>
<text x="592.5" y="354.5" font-family="Liberation Sans" font-size="15" fill="#e8e8e8">0</text>
<text x="748" y="354.5" font-family="Liberation Sans" font-size="15" fill="#e8e8e8">50</text>
<text x="905" y="354.5" font-family="Liberation Sans" font-size="15" fill="#e8e8e8">100</text>
<rect x="597" y="0" width="2" height="322" fill="#000080"/>
<rect x="600" y="0" width="1" height="322" fill="#50a8d8"/>
<rect x="603" y="0" width="1" height="322" fill="#e87020"/>
<line x1="598" y1="336" x2="598" y2="339" stroke="#e8e8e8"/>
<text x="593" y="335" font-family="Liberation Serif" font-size="14" fill="#0000a0" font-weight="bold">T</text>
<text x="598.5" y="335" font-family="Liberation Serif" font-size="14" fill="#e87020">C</text>
<rect x="405" y="379" width="628" height="23" fill="#f0f0f0"/>
<defs><pattern id="dots" width="2" height="2" patternUnits="userSpaceOnUse"><rect width="2" height="2" fill="#949494"/><rect width="1" height="1" fill="#303030"/><rect x="1" y="1" width="1" height="1" fill="#e8e8e8"/></pattern></defs>
<rect x="655" y="379" width="378" height="23" fill="url(#dots)"/>
<rect x="405" y="379" width="23" height="23" fill="#f0f0f0"/>
<rect x="405" y="379" width="23" height="1" fill="#ffffff"/>
<rect x="405" y="379" width="1" height="23" fill="#ffffff"/>
<rect x="406" y="400" width="22" height="1" fill="#a0a0a0"/>
<rect x="426" y="380" width="1" height="22" fill="#a0a0a0"/>
<rect x="405" y="401" width="23" height="1" fill="#696969"/>
<rect x="427" y="379" width="1" height="23" fill="#696969"/>
<rect x="428" y="379" width="228" height="23" fill="#f0f0f0"/>
<rect x="428" y="379" width="228" height="1" fill="#ffffff"/>
<rect x="428" y="379" width="1" height="23" fill="#ffffff"/>
<rect x="429" y="400" width="227" height="1" fill="#a0a0a0"/>
<rect x="654" y="380" width="1" height="22" fill="#a0a0a0"/>
<rect x="428" y="401" width="228" height="1" fill="#696969"/>
<rect x="655" y="379" width="1" height="23" fill="#696969"/>
<path d="M413 389.5 L419 384 L419 395 Z" fill="#000"/>
</svg>
<div class="t big" style="left:-3px;top:414px;color:#101010;"><b class=c>谐波分析图</b></div>
<div class=r style="left:9px;top:450px;width:397px;height:154px;background:#f0f0f0;box-sizing:border-box;border-top:1px solid #a0a0a0;border-left:1px solid #a0a0a0;border-right:1px solid #fff"></div>
<div class=r style="left:10px;top:451px;width:395px;height:153px;background:#f0f0f0;box-sizing:border-box;border-top:1px solid #696969;border-left:1px solid #696969;border-right:1px solid #e0e0e0"></div>
<div class=r style="left:117px;top:452px;width:285px;height:152px;background:#0a0a0a;"></div>
<div class="t" style="left:70px;top:453.5px;color:#101010;"><b class=c>百分比</b></div>
<svg width="1033" height="604"><g stroke="#505050" stroke-width="1"><line x1="139.5" y1="452" x2="139.5" y2="604"/><line x1="160.5" y1="452" x2="160.5" y2="604"/><line x1="181.5" y1="452" x2="181.5" y2="604"/><line x1="203.5" y1="452" x2="203.5" y2="604"/><line x1="224.5" y1="452" x2="224.5" y2="604"/><line x1="246.5" y1="452" x2="246.5" y2="604"/><line x1="267.5" y1="452" x2="267.5" y2="604"/><line x1="117" y1="494.5" x2="267" y2="494.5"/><line x1="117" y1="516.5" x2="267" y2="516.5"/><line x1="117" y1="537.5" x2="267" y2="537.5"/><line x1="117" y1="559.5" x2="267" y2="559.5"/><line x1="117" y1="580.5" x2="267" y2="580.5"/><line x1="117" y1="601.5" x2="267" y2="601.5"/></g>
<rect x="142" y="494" width="15" height="110" fill="#66e8dc"/>
<g stroke="#404040" stroke-width="1.5"><line x1="110" y1="494.5" x2="117" y2="494.5"/><line x1="110" y1="516.5" x2="117" y2="516.5"/><line x1="110" y1="537.5" x2="117" y2="537.5"/><line x1="110" y1="559.5" x2="117" y2="559.5"/><line x1="110" y1="580.5" x2="117" y2="580.5"/><line x1="110" y1="601.5" x2="117" y2="601.5"/></g></svg>
<div class=yl style="top:485px">337%</div>
<div class=yl style="top:507px">295%</div>
<div class=yl style="top:528px">253%</div>
<div class=yl style="top:550px">210%</div>
<div class=yl style="top:571px">168%</div>
<div class=yl style="top:592px">126%</div>
<div class=r style="left:411px;top:450px;width:622px;height:154px;background:#f0f0f0;box-sizing:border-box;border-top:1px solid #a0a0a0;border-left:1px solid #a0a0a0"></div>
<div class=r style="left:412px;top:451px;width:621px;height:153px;background:#f0f0f0;box-sizing:border-box;border-top:1px solid #696969;border-left:1px solid #696969"></div>
<div class=r style="left:626px;top:479px;width:407px;height:16px;background:#e6e4de;"></div>
<div class=r style="left:626px;top:496px;width:407px;height:26px;background:#ffffff;"></div>
<div class=r style="left:626px;top:523px;width:407px;height:25px;background:#e6e4de;"></div>
<div class=r style="left:626px;top:549px;width:407px;height:26px;background:#f0f0f0;"></div>
<div class=r style="left:626px;top:576px;width:407px;height:26px;background:#e6e4de;"></div>
<div class=r style="left:626px;top:495px;width:407px;height:1px;background:#a0a0a0;"></div>
<div class=r style="left:626px;top:522px;width:407px;height:1px;background:#a0a0a0;"></div>
<div class=r style="left:626px;top:548px;width:407px;height:1px;background:#a0a0a0;"></div>
<div class=r style="left:626px;top:575px;width:407px;height:1px;background:#a0a0a0;"></div>
<div class=r style="left:626px;top:602px;width:407px;height:1px;background:#a0a0a0;"></div>
<div class=r style="left:778px;top:478px;width:1px;height:126px;background:#a0a0a0;"></div>
<div class=r style="left:900px;top:478px;width:1px;height:126px;background:#a0a0a0;"></div>
<div class=r style="left:1028px;top:478px;width:1px;height:126px;background:#a0a0a0;"></div>
<div class=r style="left:626px;top:478px;width:1px;height:126px;background:#a0a0a0;"></div>
<div class=r style="left:626px;top:479px;width:407px;height:125px;overflow:hidden">
<div class="t" style="left:4px;top:-5.5px;color:#101010;"><s class=a>54.802V</s><b class=c>∠</b><s class=a>-179.06<s class=dg>°</s></s></div>
<div class="t" style="left:157px;top:-5.5px;color:#101010;"><s class=a>0.065V,0.11%</s></div>
<div class="t" style="left:278px;top:-5.5px;color:#101010;"><s class=a>0.975V,1.78%</s></div>
<div class="t" style="left:4px;top:22px;color:#101010;"><s class=a>54.788V</s><b class=c>∠</b><s class=a>60.96<s class=dg>°</s></s></div>
<div class="t" style="left:157px;top:22px;color:#101010;"><s class=a>0.064V,0.11%</s></div>
<div class="t" style="left:278px;top:22px;color:#101010;"><s class=a>0.952V,1.73%</s></div>
<div class="t" style="left:4px;top:48px;color:#101010;"><s class=a>54.434V</s><b class=c>∠</b><s class=a>-59.06<s class=dg>°</s></s></div>
<div class="t" style="left:157px;top:48px;color:#101010;"><s class=a>0.051V,0.09%</s></div>
<div class="t" style="left:278px;top:48px;color:#101010;"><s class=a>1.03V,1.89%</s></div>
<div class="t" style="left:4px;top:74px;color:#101010;"><s class=a>0.56V</s><b class=c>∠</b><s class=a>61.56<s class=dg>°</s></s></div>
<div class="t" style="left:157px;top:74px;color:#101010;"><s class=a>0.124V,22.1%</s></div>
<div class="t" style="left:278px;top:74px;color:#101010;"><s class=a>0.893V,153.45%</s></div>
<div class="t" style="left:4px;top:101px;color:#101010;"><s class=a>0.185V</s><b class=c>∠</b><s class=a>-172.14<s class=dg>°</s></s></div>
<div class="t" style="left:157px;top:101px;color:#101010;"><s class=a>0.076V,41.05%</s></div>
<div class="t" style="left:278px;top:101px;color:#101010;"><s class=a>0.255V,137.49%</s></div>
</div>
<div class=r style="left:627px;top:452px;width:151px;height:26px;background:#f0f0f0;background-color:#f2f2f2;background-image:radial-gradient(#dadada 0.6px, transparent 0.7px);background-size:2px 2px;box-sizing:border-box;border-left:1px solid #fff;border-right:1px solid #a0a0a0;border-bottom:2px solid #8a8a8a"></div>
<div class="t hd" style="left:627px;top:455px;width:151px"><b class=c>基</b><b class=c>波</b></div>
<div class=r style="left:779px;top:452px;width:121px;height:26px;background:#f0f0f0;background-color:#f2f2f2;background-image:radial-gradient(#dadada 0.6px, transparent 0.7px);background-size:2px 2px;box-sizing:border-box;border-left:1px solid #fff;border-right:1px solid #a0a0a0;border-bottom:2px solid #8a8a8a"></div>
<div class="t hd" style="left:779px;top:455px;width:121px"><s class=a>2</s><b class=c>次</b><b class=c>谐</b><b class=c>波</b></div>
<div class=r style="left:901px;top:452px;width:127px;height:26px;background:#f0f0f0;background-color:#f2f2f2;background-image:radial-gradient(#dadada 0.6px, transparent 0.7px);background-size:2px 2px;box-sizing:border-box;border-left:1px solid #fff;border-right:1px solid #a0a0a0;border-bottom:2px solid #8a8a8a"></div>
<div class="t hd" style="left:901px;top:455px;width:127px"><s class=a>3</s><b class=c>次</b><b class=c>谐</b><b class=c>波</b></div>
<div class=r style="left:1029px;top:452px;width:11px;height:26px;background:#f0f0f0;background-color:#f2f2f2;background-image:radial-gradient(#dadada 0.6px, transparent 0.7px);background-size:2px 2px;box-sizing:border-box;border-left:1px solid #fff;border-right:1px solid #a0a0a0;border-bottom:2px solid #8a8a8a"></div>
<div class=r style="left:414px;top:478px;width:212px;height:126px;overflow:hidden">
<div class=r style="left:0;top:-6px;width:212px;height:25px;background:#f0f0f0;box-sizing:border-box;border-top:1px solid #fff;border-left:1px solid #fff;border-right:2px solid #808080;border-bottom:2px solid #7a7a7a"></div>
<div class="t" style="left:4px;top:-3px;color:#101010"><s class=a>32.</s><b class=c>发电机机端</b><s class=a>A</s><b class=c>相电压</b></div>
<div class=r style="left:0;top:19px;width:212px;height:26px;background:#f0f0f0;box-sizing:border-box;border-top:1px solid #fff;border-left:1px solid #fff;border-right:2px solid #808080;border-bottom:2px solid #7a7a7a"></div>
<div class="t" style="left:4px;top:23px;color:#101010"><s class=a>33.</s><b class=c>发电机机端</b><s class=a>B</s><b class=c>相电压</b></div>
<div class=r style="left:0;top:45px;width:212px;height:27px;background:#f0f0f0;box-sizing:border-box;border-top:1px solid #fff;border-left:1px solid #fff;border-right:2px solid #808080;border-bottom:2px solid #7a7a7a"></div>
<div class="t" style="left:4px;top:49px;color:#101010"><s class=a>34.</s><b class=c>发电机机端</b><s class=a>C</s><b class=c>相电压</b></div>
<div class=r style="left:0;top:73px;width:211px;height:24px;background-color:#f2f2f2;background-image:radial-gradient(#dadada 0.6px, transparent 0.7px);background-size:2px 2px;box-sizing:border-box;border-left:2px solid #8a8a8a;border-bottom:1px solid #fff"></div>
<div class="t bold" style="left:4px;top:77px;color:#101010"><s class=a>35.</s><b class=c>机端零序电压</b></div>
<div class=r style="left:0;top:98px;width:212px;height:26px;background:#f0f0f0;box-sizing:border-box;border-top:1px solid #fff;border-left:1px solid #fff;border-right:2px solid #808080;border-bottom:2px solid #7a7a7a"></div>
<div class="t" style="left:4px;top:102px;color:#101010"><s class=a>36.</s><b class=c>中性点零序电压</b></div>
</div>
<div class=r style="left:414px;top:452px;width:212px;height:26px;background:#f0f0f0;"></div>
<div class=wm style="left:851px;top:544.5px">电力安全生产</div>
<svg width="1033" height="604" style="left:0;top:0"><ellipse cx="817" cy="553.5" rx="14" ry="12" fill="rgba(255,255,255,0.88)"/><path d="M806 561 L804 568 L813 563 Z" fill="rgba(255,255,255,0.88)"/><path d="M804 556 L810 563 L817 566" fill="none" stroke="#444" stroke-width="0.7"/><ellipse cx="829.5" cy="562" rx="11.5" ry="10.5" fill="rgba(255,255,255,0.85)" stroke="#3a3a3a" stroke-width="0.8"/><path d="M834 571 L839 574 L836 569 Z" fill="rgba(255,255,255,0.85)" stroke="#3a3a3a" stroke-width="0.6"/><g fill="none" stroke="#8a8a8a" stroke-width="0.9"><circle cx="812" cy="548" r="1.6"/><circle cx="823" cy="548" r="1.6"/><circle cx="835" cy="557.5" r="1.4"/></g><circle cx="826" cy="557.5" r="1.4" fill="#303030"/></svg>
</div>
</body></html>
